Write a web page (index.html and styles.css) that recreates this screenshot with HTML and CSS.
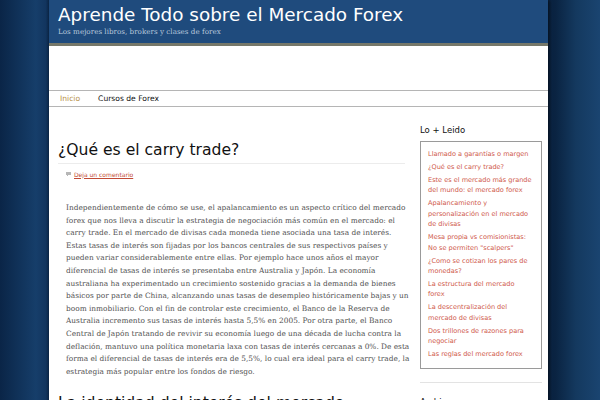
FILE: index.html
```html
<!DOCTYPE html>
<html lang="es">
<head>
<meta charset="utf-8">
<title>Aprende Todo sobre el Mercado Forex</title>
<link rel="stylesheet" href="styles.css">
</head>
<body>
<div class="page">
  <header class="masthead">
    <h1 class="site-title">Aprende Todo sobre el Mercado Forex</h1>
    <p class="tagline">Los mejores libros, brokers y clases de forex</p>
  </header>
  <div class="banner"></div>
  <nav class="menu">
    <a class="menu-item current" href="#">Inicio</a>
    <a class="menu-item" href="#">Cursos de Forex</a>
  </nav>
  <div class="wrap">
    <main class="content">
      <article class="post">
        <h2 class="entry-title">¿Qué es el carry trade?</h2>
        <div class="meta">
          <svg class="comment-icon" width="5" height="4" viewBox="0 0 5 4"><rect x="0" y="0" width="5" height="3" fill="#b7b7b7"/><rect x="1" y="3" width="1" height="1" fill="#b7b7b7"/></svg>
          <a class="comment-link" href="#">Deja un comentario</a>
        </div>
        <p class="entry-text">Independientemente de cómo se use, el apalancamiento es un aspecto crítico del mercado<br>
forex que nos lleva a discutir la estrategia de negociación más común en el mercado: el<br>
carry trade. En el mercado de divisas cada moneda tiene asociada una tasa de interés.<br>
Estas tasas de interés son fijadas por los bancos centrales de sus respectivos países y<br>
pueden variar considerablemente entre ellas. Por ejemplo hace unos años el mayor<br>
diferencial de tasas de interés se presentaba entre Australia y Japón. La economía<br>
australiana ha experimentado un crecimiento sostenido gracias a la demanda de bienes<br>
básicos por parte de China, alcanzando unas tasas de desempleo históricamente bajas y un<br>
boom inmobiliario. Con el fin de controlar este crecimiento, el Banco de la Reserva de<br>
Australia incremento sus tasas de interés hasta 5,5% en 2005. Por otra parte, el Banco<br>
Central de Japón tratando de revivir su economía luego de una década de lucha contra la<br>
deflación, mantuvo una política monetaria laxa con tasas de interés cercanas a 0%. De esta<br>
forma el diferencial de tasas de interés era de 5,5%, lo cual era ideal para el carry trade, la<br>
estrategia más popular entre los fondos de riesgo.</p>
      </article>
      <h2 class="entry-title next">La identidad del interés del mercado</h2>
    </main>
    <aside class="sidebar">
      <h3 class="widget-title">Lo + Leido</h3>
      <ul class="widget-box">
        <li><a href="#">Llamado a garantías o margen</a></li>
        <li><a href="#">¿Qué es el carry trade?</a></li>
        <li><a href="#">Este es el mercado más grande del mundo: el mercado forex</a></li>
        <li><a href="#">Apalancamiento y personalización en el mercado de divisas</a></li>
        <li><a href="#">Mesa propia vs comisionistas: No se permiten "scalpers"</a></li>
        <li><a href="#">¿Como se cotizan los pares de monedas?</a></li>
        <li><a href="#">La estructura del mercado forex</a></li>
        <li><a href="#">La descentralización del mercado de divisas</a></li>
        <li><a href="#">Dos trillones de razones para negociar</a></li>
        <li><a href="#">Las reglas del mercado forex</a></li>
      </ul>
      <div class="widget-sep"></div>
      <h3 class="widget-title">Archivos</h3>
    </aside>
  </div>
</div>
</body>
</html>
```
FILE: styles.css
```css
html, body {
  margin: 0;
  padding: 0;
  height: 100%;
  overflow: hidden;
}
body {
  background: linear-gradient(90deg, #0a2547 0%, #163e6a 6%, #12355f 7.6%, #0b2545 8.2%, #0b2545 91.5%, #0a2341 92.5%, #14395f 96%, #1a4470 100%);
  font-family: "DejaVu Sans", sans-serif;
}
.page {
  width: 499px;
  margin-left: 49px;
  background: #fff;
  min-height: 400px;
  box-shadow: 2px 0 3px rgba(0,0,0,0.5);
}
.masthead {
  background: #1f4b7d;
  height: 46px;
  padding-left: 9px;
  box-sizing: border-box;
  padding-top: 4px;
  border-bottom: 3px solid #76786a;
}
.site-title {
  margin: 0;
  font-family: "DejaVu Sans", sans-serif;
  font-weight: normal;
  font-size: 18.4px;
  line-height: 22px;
  color: #fff;
}
.tagline {
  margin: 1px 0 0;
  font-family: "DejaVu Serif", serif;
  font-size: 7.2px;
  line-height: 9px;
  color: #b9c8dc;
}
.banner {
  height: 44px;
}
.menu {
  display: flex;
  gap: 18px;
  padding-left: 11px;
  height: 15px;
  align-items: center;
  border-top: 1px solid #b5b5b5;
  border-bottom: 1px solid #b5b5b5;
}
.menu-item {
  font-size: 7.6px;
  color: #111;
  text-decoration: none;
}
.menu-item.current {
  color: #b8914a;
}
.wrap {
  display: flex;
  gap: 8px;
  padding: 0 6px 0 9px;
}
.content {
  width: 354px;
  flex: none;
}
.entry-title {
  margin: 33px 7px 0 0;
  font-weight: normal;
  font-size: 15.6px;
  line-height: 20px;
  color: #111;
  padding-bottom: 3px;
  border-bottom: 1px solid #ececec;
}
.entry-title.next {
  margin-top: 15px;
  border-bottom: none;
}
.meta {
  margin: 5px 0 0 8px;
  display: flex;
  align-items: center;
  gap: 3px;
  height: 10px;
}
.comment-link {
  font-family: "DejaVu Sans", sans-serif;
  font-size: 6px;
  color: #c24a35;
}
.entry-text {
  margin: 23px 0 0 8px;
  width: 346px;
  font-family: "DejaVu Serif", serif;
  font-size: 7.4px;
  line-height: 12.6px;
  color: #505050;
  white-space: nowrap;
}
.sidebar {
  width: 122px;
  flex: none;
}
.widget-title {
  margin: 17px 0 0;
  font-weight: normal;
  font-size: 8.5px;
  line-height: 12px;
  color: #111;
}
.widget-box {
  list-style: none;
  margin: 5px 0 0;
  padding: 7px 8.5px 8px 7px;
  border: 1px solid #9a9a9a;
  display: flex;
  flex-direction: column;
  gap: 2.6px;
}
.widget-box li {
  font-size: 6.55px;
  line-height: 10.4px;
}
.widget-box a {
  color: #cf5a4c;
  text-decoration: none;
}
.widget-sep {
  margin-top: 13px;
  border-top: 1px solid #e3e3e3;
}
.widget-sep + .widget-title {
  margin-top: 13px;
}
```
